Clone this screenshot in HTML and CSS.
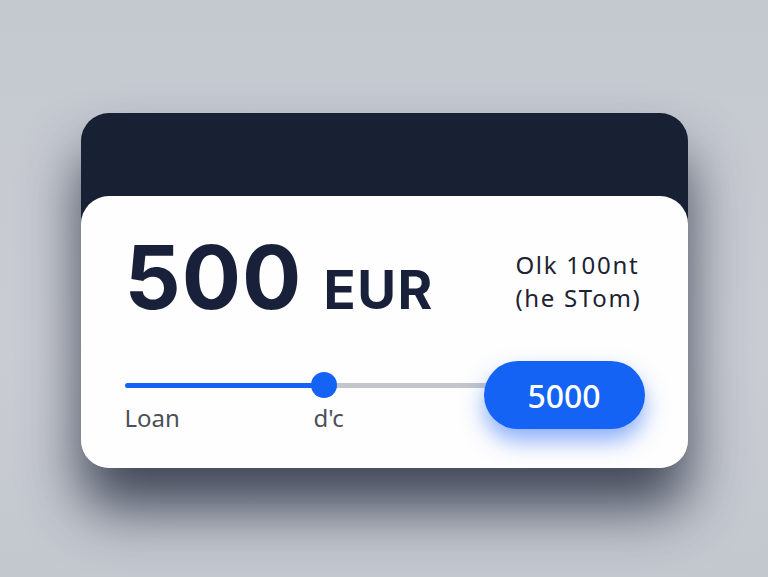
FILE: index.html
```html
<!DOCTYPE html>
<html lang="en">
<head>
    <meta charset="UTF-8">
    <meta name="viewport" content="width=device-width, initial-scale=1.0">
    <title>Loan Slider</title>
    <link rel="stylesheet" href="styles.css">
</head>
<body>
    <div class="card">
        <div class="card-top"></div>
        <div class="panel">
            <div class="summary">
                <div class="amount">
                    <span class="value">500</span>
                    <span class="currency">EUR</span>
                </div>
                <div class="note">Olk 100nt<br>(he STom)</div>
            </div>
            <div class="controls">
                <div class="slider">
                    <div class="track">
                        <div class="fill" style="width: 199px"></div>
                        <div class="thumb"></div>
                        <div class="rest"></div>
                    </div>
                    <div class="labels">
                        <span class="label-start">Loan</span>
                        <span>d'c</span>
                    </div>
                </div>
                <div class="pill">5000</div>
            </div>
        </div>
    </div>
</body>
</html>
```

FILE: styles.css
```css
body {
    margin: 0;
    height: 577px;
    font-family: "Noto Sans", Arial, sans-serif;
    background: linear-gradient(#c4c8cf, #c9ccd3 60%, #c3c7ce);
    display: flex;
    justify-content: center;
    overflow: hidden;
}
.card {
    margin-top: 113px;
    width: 607px;
    height: 355px;
    border-radius: 28px;
    box-shadow: 0 40px 56px 0 rgba(50, 57, 74, 0.9);
}
.card-top {
    height: 115px;
    background: #182034;
    border-radius: 28px 28px 0 0;
}
.panel {
    margin-top: -32px;
    height: 272px;
    background: #fefefe;
    border-radius: 28px;
    padding: 0 46px 0 44px;
    box-sizing: border-box;
    overflow: hidden;
}
.summary {
    display: flex;
    justify-content: space-between;
    align-items: flex-start;
    padding-top: 37px;
}
.amount {
    display: flex;
    align-items: baseline;
    color: #18203a;
    font-family: Inter, "Noto Sans", sans-serif;
    font-weight: 700;
    line-height: 1;
}
.value {
    font-size: 88px;
    letter-spacing: 1px;
}
.currency {
    font-size: 53px;
    margin-left: 21px;
    letter-spacing: 1.5px;
}
.note {
    margin-top: 15px;
    font-size: 24px;
    line-height: 33px;
    letter-spacing: 1.7px;
    color: #1c2232;
}
.controls {
    display: flex;
    align-items: flex-start;
    margin-top: 40px;
    margin-right: -3px;
}
.slider {
    flex: 1;
}
.track {
    display: flex;
    align-items: center;
    height: 26px;
    margin-top: 11px;
}
.fill {
    height: 5px;
    background: #1463f4;
    border-radius: 3px 0 0 3px;
}
.thumb {
    width: 26px;
    height: 26px;
    margin-left: -13px;
    margin-right: -13px;
    border-radius: 50%;
    background: #1463f4;
    position: relative;
}
.rest {
    flex: 1;
    height: 5px;
    background: #c2c5ca;
}
.labels {
    display: flex;
    font-size: 24px;
    color: #4b5058;
    margin-top: 3px;
}
.label-start {
    width: 189px;
}
.pill {
    flex-shrink: 0;
    margin-left: -10px;
    width: 161px;
    height: 68px;
    border-radius: 34px;
    background: #1463f4;
    color: #fff;
    font-size: 32px;
    font-weight: 500;
    display: flex;
    align-items: center;
    justify-content: center;
    box-shadow: 0 12px 22px rgba(30, 100, 245, 0.5);
    position: relative;
}
```
